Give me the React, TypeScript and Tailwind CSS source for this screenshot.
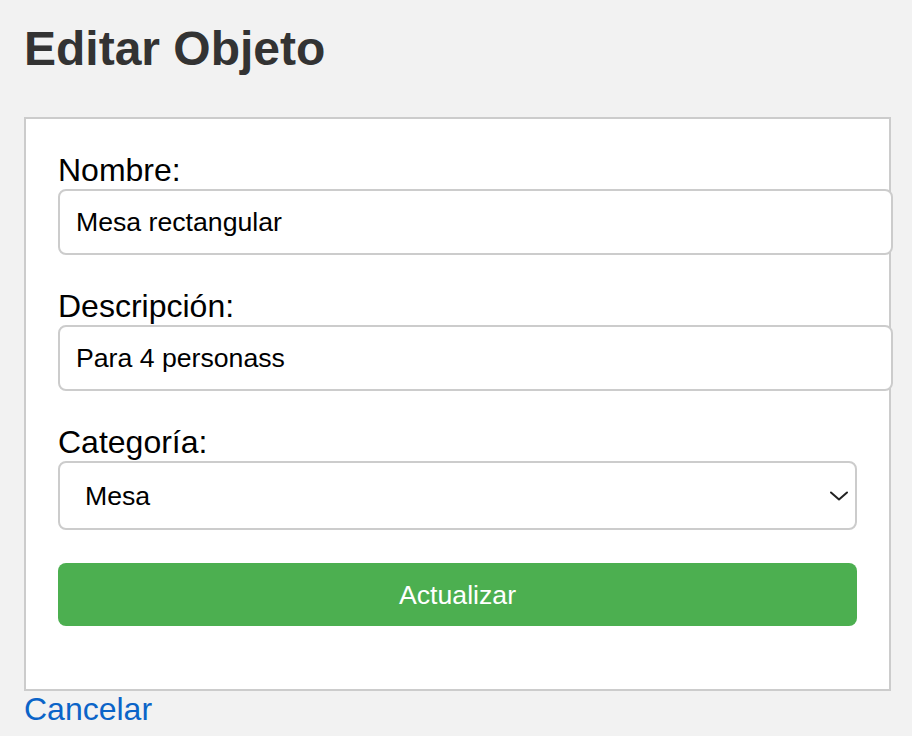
import React from "react";

export default function App() {
  const font = { fontFamily: '"Liberation Sans", Arial, Helvetica, sans-serif' };
  return (
    <div className="min-h-screen w-full bg-[#f2f2f2] pl-[24px] pt-[21px]" style={font}>
      <h1 className="m-0 mb-[41px] text-[48px] font-bold leading-[55px] text-[#333333]">Editar Objeto</h1>
      <div className="w-[867px] border-2 border-[#cccccc] bg-white px-[32px] pt-[33px] pb-[63px]">
        <form className="flex flex-col" onSubmit={(e) => e.preventDefault()}>
          <label className="block text-[32px] leading-[37px] text-black">Nombre:</label>
          <input
            type="text"
            defaultValue="Mesa rectangular"
            className="mb-[33px] box-content h-[30px] w-full rounded-[8px] border-2 border-[#cccccc] bg-white px-[16px] py-[16px] text-[26.667px] leading-[30px] text-black outline-none"
            style={font}
          />
          <label className="block text-[32px] leading-[37px] text-black">Descripción:</label>
          <input
            type="text"
            defaultValue="Para 4 personass"
            className="mb-[33px] box-content h-[30px] w-full rounded-[8px] border-2 border-[#cccccc] bg-white px-[16px] py-[16px] text-[26.667px] leading-[30px] text-black outline-none"
            style={font}
          />
          <label className="block text-[32px] leading-[37px] text-black">Categoría:</label>
          <div className="mb-[33px] flex h-[69px] w-full items-center justify-between rounded-[8px] border-2 border-[#cccccc] bg-white pl-[25px] pr-[7px]">
            <span className="text-[26.667px] leading-[30px] text-black">Mesa</span>
            <svg width="18" height="10" viewBox="0 0 18 10" fill="none">
              <path d="M1 1.5 L9 8.5 L17 1.5" stroke="#222222" strokeWidth="2" strokeLinecap="round" strokeLinejoin="round" />
            </svg>
          </div>
          <button
            type="submit"
            className="flex h-[63px] w-full items-center justify-center rounded-[8px] bg-[#4caf50] text-[26.667px] leading-[30px] text-white"
            style={font}
          >
            Actualizar
          </button>
        </form>
      </div>
      <a href="#" className="block w-fit text-[32px] leading-[37px] text-[#0b64c8] no-underline">
        Cancelar
      </a>
    </div>
  );
}
